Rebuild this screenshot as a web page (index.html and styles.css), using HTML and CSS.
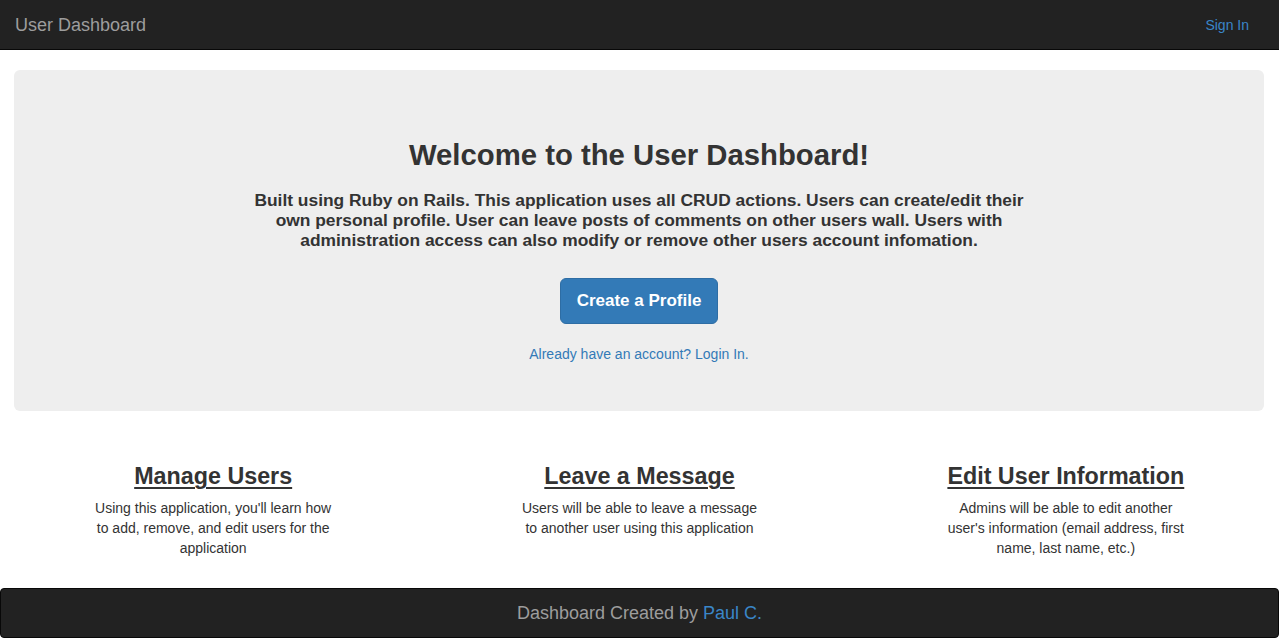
FILE: index.html
```html
<!DOCTYPE html>
<html lang="en">
<head>
<meta charset="utf-8">
<title>User Dashboard</title>
<link rel="stylesheet" href="styles.css">
</head>
<body>
<div class="page">
  <nav class="navbar">
    <a class="brand" href="#">User Dashboard</a>
    <a class="nav-link" href="#">Sign In</a>
  </nav>

  <div class="container">
    <section class="jumbotron">
      <h2 class="jumbo-title">Welcome to the User Dashboard!</h2>
      <h4 class="jumbo-text">Built using Ruby on Rails. This application uses all CRUD actions. Users can create/edit their own personal profile. User can leave posts of comments on other users wall. Users with administration access can also modify or remove other users account infomation.</h4>
      <a class="btn-primary" href="#">Create a Profile</a>
      <a class="login-link" href="#">Already have an account? Login In.</a>
    </section>
  </div>

  <div class="features">
    <div class="feature">
      <h3 class="feature-title"><a href="#">Manage Users</a></h3>
      <p class="feature-text">Using this application, you'll learn how to add, remove, and edit users for the application</p>
    </div>
    <div class="feature">
      <h3 class="feature-title"><a href="#">Leave a Message</a></h3>
      <p class="feature-text">Users will be able to leave a message to another user using this application</p>
    </div>
    <div class="feature">
      <h3 class="feature-title"><a href="#">Edit User Information</a></h3>
      <p class="feature-text">Admins will be able to edit another user's information (email address, first name, last name, etc.)</p>
    </div>
  </div>

  <footer class="footer">
    <span>Dashboard Created by <a href="#">Paul C.</a></span>
  </footer>
</div>
</body>
</html>
```

FILE: styles.css
```css
* { box-sizing: border-box; }

html, body {
  margin: 0;
  padding: 0;
  background: #fff;
}

body {
  font-family: "Liberation Sans", Arial, Helvetica, sans-serif;
  font-size: 14px;
  line-height: 20px;
  color: #333;
}

a { text-decoration: none; }

.page {
  width: 1279px;
}

.navbar {
  height: 50px;
  background: #222;
  border-bottom: 1px solid #080808;
  display: flex;
  align-items: center;
  justify-content: space-between;
  padding: 0 30px 0 15px;
}

.brand {
  font-size: 18px;
  color: #9d9d9d;
  line-height: 20px;
}

.nav-link {
  font-size: 14px;
  color: #3a86c8;
  line-height: 20px;
}

.container {
  padding: 20px 15px 0 14px;
}

.jumbotron {
  background: #eee;
  border-radius: 6px;
  padding: 48px 60px 47px;
  display: flex;
  flex-direction: column;
  align-items: center;
  text-align: center;
}

.jumbo-title {
  margin: 20px 0 20px;
  font-size: 29.3px;
  line-height: 33px;
  font-weight: bold;
  color: #333;
}

.jumbo-text {
  margin: 0;
  max-width: 790px;
  font-size: 17.4px;
  line-height: 19.8px;
  font-weight: bold;
  color: #333;
}

.btn-primary {
  margin-top: 28px;
  display: inline-block;
  padding: 12px 16px;
  font-size: 17px;
  line-height: 20px;
  font-weight: bold;
  color: #fff;
  background: #337ab7;
  border: 1px solid #2e6da4;
  border-radius: 6px;
}

.login-link {
  margin-top: 20px;
  font-size: 14px;
  line-height: 20px;
  color: #337ab7;
}

.features {
  margin-top: 30px;
  display: grid;
  grid-template-columns: repeat(3, 1fr);
  text-align: center;
}

.feature {
  display: flex;
  flex-direction: column;
  align-items: center;
  padding: 0 15px;
}

.feature-title {
  margin: 22px 0 8px;
  font-size: 23.3px;
  line-height: 26.4px;
  font-weight: bold;
}

.feature-title a {
  color: #333;
  text-decoration: underline;
  text-decoration-thickness: 2px;
  text-underline-offset: 3px;
}

.feature-text {
  margin: 0 0 10px;
  max-width: 245px;
  font-size: 14px;
  line-height: 20px;
  color: #333;
}

.footer {
  margin-top: 20px;
  height: 50px;
  background: #222;
  border: 1px solid #080808;
  border-radius: 4px;
  display: flex;
  align-items: center;
  justify-content: center;
  font-size: 18px;
  line-height: 20px;
  color: #9d9d9d;
  padding-top: 1px;
}

.footer a {
  color: #3a86c8;
}
```
